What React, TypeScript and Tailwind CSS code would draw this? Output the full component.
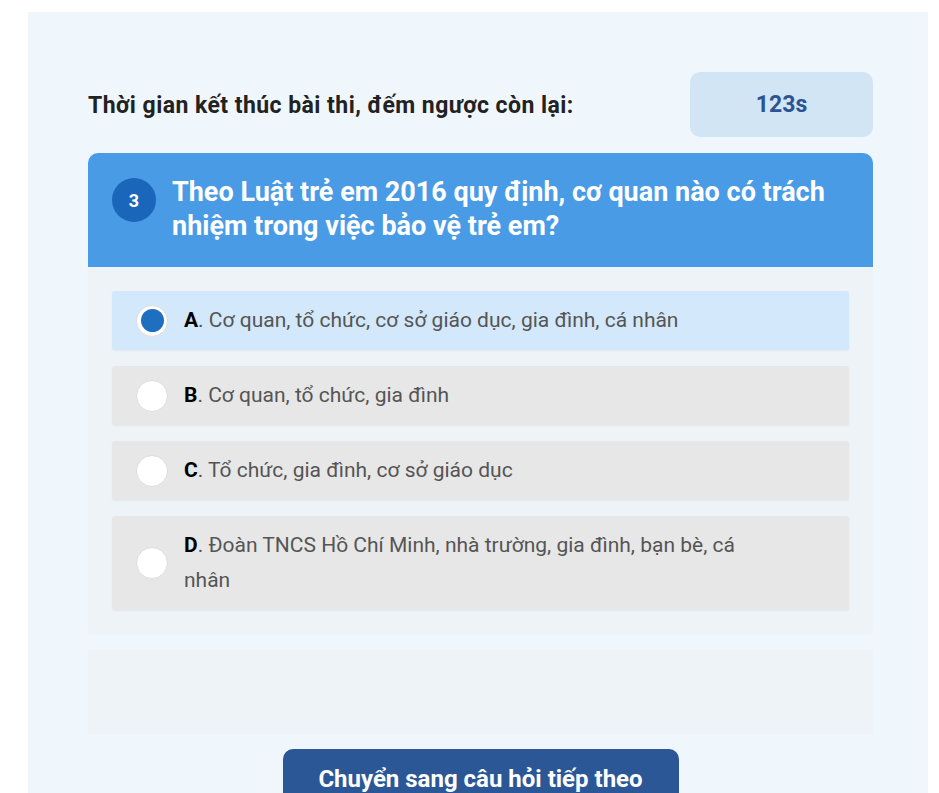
const options = [
  { key: "A", text: "Cơ quan, tổ chức, cơ sở giáo dục, gia đình, cá nhân" },
  { key: "B", text: "Cơ quan, tổ chức, gia đình" },
  { key: "C", text: "Tổ chức, gia đình, cơ sở giáo dục" },
  { key: "D", text: "Đoàn TNCS Hồ Chí Minh, nhà trường, gia đình, bạn bè, cá nhân" },
];

const App = () => {
  const selected = "A";

  return (
    <div className="min-h-screen bg-white font-['Roboto',sans-serif] overflow-hidden">
      <div className="ml-[28px] mt-[12px] w-[900px] bg-[#f0f7fc] pl-[60px] pt-[60px] pb-[40px]">
        <div className="w-[785px]">
          <div className="flex justify-between items-center">
            <p className="pt-[3px] text-[23px] tracking-[0.45px] font-bold text-[#222]">
              Thời gian kết thúc bài thi, đếm ngược còn lại:
            </p>
            <div className="w-[183px] h-[65px] rounded-[10px] bg-[#d2e5f5] flex items-center justify-center pt-[2px] text-[23px] font-bold text-[#2b5494]">
              123s
            </div>
          </div>

          <div className="mt-[16px] rounded-t-[10px] bg-[#4a9be6] pl-[24px] pr-[40px] pt-[22px] pb-[24px] flex gap-[16px]">
            <div className="w-[44px] h-[44px] shrink-0 rounded-full bg-[#1a66bb] flex items-center justify-center text-white text-[18px] font-bold mt-[3px]">
              3
            </div>
            <p className="text-white text-[27px] font-bold leading-[34px]">
              Theo Luật trẻ em 2016 quy định, cơ quan nào có trách nhiệm trong việc bảo vệ trẻ em?
            </p>
          </div>

          <div className="bg-[#edf3f6] p-[24px] flex flex-col gap-[16px]">
            {options.map((o) => {
              const active = o.key === selected;
              return (
                <div
                  key={o.key}
                  className={`rounded-[3px] pl-[24px] pr-[105px] py-[12px] flex items-center gap-[16px] shadow-[0_1px_2px_rgba(0,0,0,0.05)] ${
                    active ? "bg-[#d3e8fb]" : "bg-[#e7e7e7]"
                  }`}
                >
                  <div className="w-[32px] h-[32px] shrink-0 rounded-full bg-white border border-[#ddd] flex items-center justify-center">
                    {active && <div className="w-[23px] h-[23px] rounded-full bg-[#1e6fc0]" />}
                  </div>
                  <p className="text-[21px] leading-[35px] text-[#555]">
                    <span className="font-bold text-black">{o.key}</span>. {o.text}
                  </p>
                </div>
              );
            })}
          </div>

          <div className="mt-[16px] h-[84px] bg-[#edf3f6]" />

          <div className="mt-[15px] flex justify-center">
            <button className="w-[396px] h-[60px] rounded-[10px] bg-[#2b5797] text-white text-[24px] font-bold">
              Chuyển sang câu hỏi tiếp theo
            </button>
          </div>
        </div>
      </div>
    </div>
  );
};

export default App;
